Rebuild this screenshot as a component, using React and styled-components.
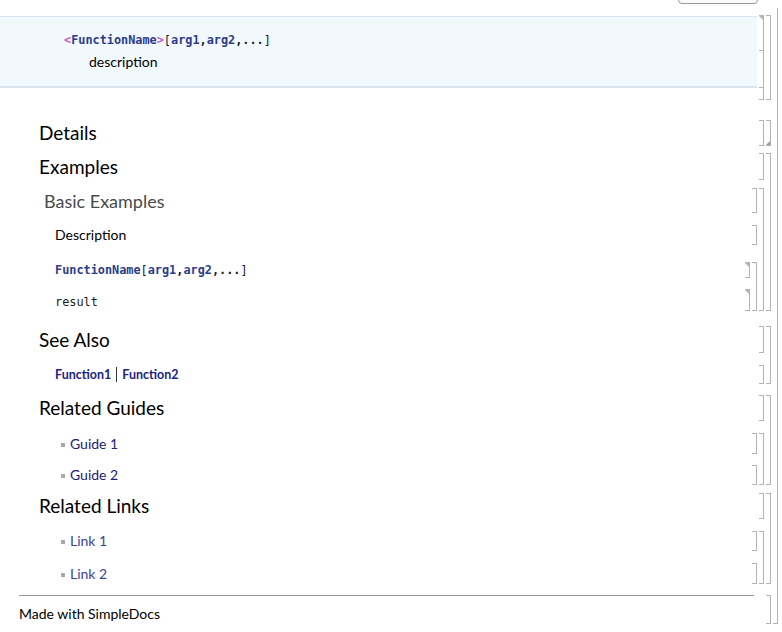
import React from "react";
import styled, { createGlobalStyle, css } from "styled-components";

const GlobalStyle = createGlobalStyle`
  html, body {
    margin: 0;
    padding: 0;
    background: #fff;
  }
  body {
    font-family: Lato, "Open Sans", sans-serif;
    color: #000;
    overflow: hidden;
  }
`;

const LINE = "#b3b3b3";

const Page = styled.div`
  width: 782px;
  height: 632px;
  box-sizing: border-box;
  padding-right: 4px;
  overflow: hidden;
`;

const Toolbar = styled.div`
  height: 8px;
  display: flex;
  justify-content: flex-end;
  padding-right: 20px;
`;

const ToolButton = styled.div`
  width: 80px;
  height: 13px;
  margin-top: -9px;
  box-sizing: border-box;
  border: 1px solid #9a9a9a;
  border-radius: 4px;
  background: #fafafa;
`;

const Row = styled.div`
  display: flex;
  margin-top: ${(p) => p.$mt || 0}px;
`;

const Stack = styled.div`
  flex: 1;
  min-width: 0;
  display: flex;
  flex-direction: column;
`;

const Bracket = styled.div`
  flex: 0 0 7px;
  position: relative;

  &::before {
    content: "";
    position: absolute;
    top: 0;
    bottom: 0;
    right: 0;
    width: 5px;
    box-sizing: border-box;
    border: 1px solid ${LINE};
    border-left: 0;
    border-top-width: ${(p) => (p.$open ? 0 : 1)}px;
  }

  ${(p) =>
    p.$mark === "top" &&
    css`
      &::after {
        content: "";
        position: absolute;
        top: 1px;
        right: 1px;
        border-top: 4px solid ${LINE};
        border-left: 4px solid transparent;
      }
    `}

  ${(p) =>
    p.$mark === "bottom" &&
    css`
      &::after {
        content: "";
        position: absolute;
        bottom: 1px;
        right: 1px;
        border-bottom: 4px solid #9a9a9a;
        border-left: 4px solid transparent;
      }
    `}
`;

const Tick = styled.span`
  position: absolute;
  right: 1px;
  top: ${(p) => p.$y}px;
  width: 4px;
  height: 1px;
  background: ${LINE};
`;

const CellBody = styled.div`
  flex: 1;
  min-width: 0;
  height: ${(p) => p.$h}px;
  display: flex;
  align-items: center;
`;

const Group = ({ mt, closed, open, children }) => (
  <Row $mt={mt}>
    <Stack>{children}</Stack>
    <Bracket $mark={closed ? "bottom" : undefined} $open={open} />
  </Row>
);

const Cell = ({ mt, h, mark, ticks = [], children }) => (
  <Row $mt={mt}>
    <CellBody $h={h}>{children}</CellBody>
    <Bracket $mark={mark}>
      {ticks.map((y) => (
        <Tick key={y} $y={y} />
      ))}
    </Bracket>
  </Row>
);

/* header usage block */
const Usage = styled.div`
  align-self: flex-start;
  width: 100%;
  margin-top: 1px;
  height: 72px;
  box-sizing: border-box;
  background: #f2f9fd;
  border-top: 1px solid #d6e4f1;
  border-bottom: 2px solid #dae5ef;
  padding: 16px 0 0 64px;
`;

const Mono = styled.div`
  font-family: "DejaVu Sans Mono", "Liberation Mono", monospace;
  font-size: 11.85px;
  line-height: 14px;
  color: #1a1a1a;
  white-space: pre;
`;

const Tok = styled.span`
  font-weight: ${(p) => (p.$bold ? 700 : 400)};
  color: ${(p) =>
    p.$kind === "angle" ? "#c25cc4" : p.$kind === "name" ? "#2b3c8a" : "inherit"};
`;

const UsageText = styled.div`
  margin-top: 6px;
  padding-left: 25px;
  font-size: 14px;
  line-height: 18px;
`;

const Heading = styled.div`
  padding-left: 39px;
  font-size: 19px;
  line-height: 24px;
  color: #000;
`;

const Subheading = styled.div`
  padding-left: 44px;
  font-size: 18px;
  line-height: 22px;
  color: #4a4a4a;
`;

const Text = styled.div`
  padding-left: 55px;
  font-size: 14px;
  line-height: 18px;
`;

const CodeLine = styled(Mono)`
  padding-left: 55px;
  padding-top: ${(p) => p.$drop || 0}px;
`;

const SeeAlso = styled.div`
  padding-left: 55px;
  font-size: 12.5px;
  line-height: 16px;
  font-weight: 700;
  color: #1b2382;
  display: flex;
  align-items: center;
`;

const Sep = styled.span`
  display: inline-block;
  width: 1px;
  height: 15px;
  background: #333;
  margin: 0 5px;
`;

const Bullet = styled.div`
  padding-left: 61px;
  display: flex;
  align-items: center;
  font-size: 14px;
  line-height: 18px;
  color: ${(p) => (p.$light ? "#3a4596" : "#1d2079")};

  &::before {
    content: "";
    width: 4px;
    height: 4px;
    margin-right: 5px;
    margin-top: 2px;
    background: #a8a8a8;
  }
`;

const FooterBody = styled.div`
  align-self: flex-start;
  margin: 0 10px 0 19px;
  flex: 1;
  border-top: 1px solid #9a9a9a;
  padding-top: 9px;
  font-size: 14px;
  line-height: 18px;
`;

const Signature = () => (
  <Mono>
    <Tok $kind="angle" $bold>&lt;</Tok>
    <Tok $kind="name" $bold>FunctionName</Tok>
    <Tok $kind="angle" $bold>&gt;</Tok>
    <Tok>[</Tok>
    <Tok $kind="name" $bold>arg1</Tok>
    <Tok $bold>,</Tok>
    <Tok $kind="name" $bold>arg2</Tok>
    <Tok $bold>,...</Tok>
    <Tok>]</Tok>
  </Mono>
);

export default function App() {
  return (
    <Page>
      <GlobalStyle />
      <Toolbar>
        <ToolButton />
      </Toolbar>
      <Group open>
        <Group mt={7}>
          <Cell h={85} mark="top" ticks={[35, 72]}>
            <Usage>
              <Signature />
              <UsageText>description</UsageText>
            </Usage>
          </Cell>
        </Group>

        <Group mt={20} closed>
          <Cell h={26}>
            <Heading>Details</Heading>
          </Cell>
        </Group>

        <Group mt={7}>
          <Cell h={27}>
            <Heading>Examples</Heading>
          </Cell>
          <Group mt={8}>
            <Cell h={25}>
              <Subheading>Basic Examples</Subheading>
            </Cell>
            <Cell mt={12} h={20}>
              <Text>Description</Text>
            </Cell>
            <Group mt={17}>
              <Cell h={16} mark="top">
                <CodeLine>
                  <Tok $kind="name" $bold>FunctionName</Tok>
                  <Tok>[</Tok>
                  <Tok $kind="name" $bold>arg1</Tok>
                  <Tok $bold>,</Tok>
                  <Tok $kind="name" $bold>arg2</Tok>
                  <Tok $bold>,...</Tok>
                  <Tok>]</Tok>
                </CodeLine>
              </Cell>
              <Cell mt={11} h={22} mark="top">
                <CodeLine $drop={3}>result</CodeLine>
              </Cell>
            </Group>
          </Group>
        </Group>

        <Group mt={15}>
          <Cell h={27}>
            <Heading>See Also</Heading>
          </Cell>
          <Cell mt={12} h={19}>
            <SeeAlso>
              Function1
              <Sep />
              Function2
            </SeeAlso>
          </Cell>
        </Group>

        <Group mt={11}>
          <Cell h={26}>
            <Heading>Related Guides</Heading>
          </Cell>
          <Group mt={12}>
            <Cell h={21}>
              <Bullet>Guide 1</Bullet>
            </Cell>
            <Cell mt={11} h={20}>
              <Bullet>Guide 2</Bullet>
            </Cell>
          </Group>
        </Group>

        <Group mt={8}>
          <Cell h={26}>
            <Heading>Related Links</Heading>
          </Cell>
          <Group mt={12}>
            <Cell h={20}>
              <Bullet $light>Link 1</Bullet>
            </Cell>
            <Cell mt={12} h={21}>
              <Bullet $light>Link 2</Bullet>
            </Cell>
          </Group>
        </Group>

        <Cell mt={11} h={29}>
          <FooterBody>Made with SimpleDocs</FooterBody>
        </Cell>
      </Group>
    </Page>
  );
}
